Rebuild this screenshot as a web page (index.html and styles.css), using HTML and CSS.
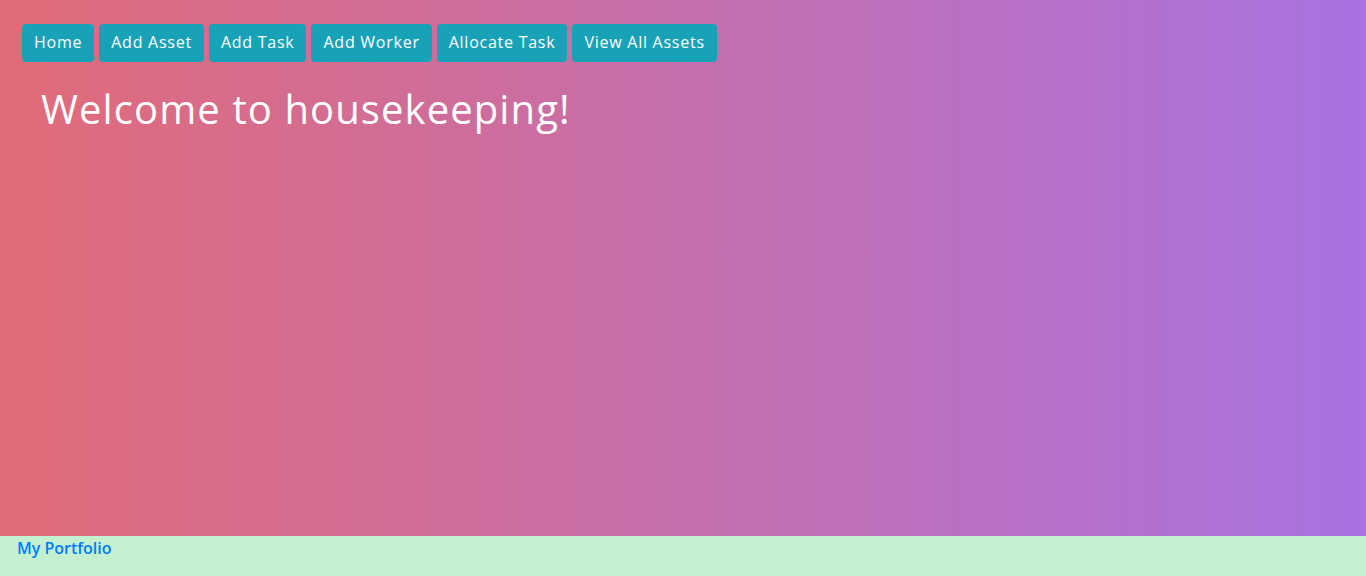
FILE: index.html
```html
<!DOCTYPE html>
<html>
<head>
<meta charset="utf-8">
<link rel="stylesheet" href="styles.css">
</head>
<body>
<div class="page">
  <main class="main">
    <nav class="nav">
      <a class="btn" href="#">Home</a>
      <a class="btn" href="#">Add Asset</a>
      <a class="btn" href="#">Add Task</a>
      <a class="btn" href="#">Add Worker</a>
      <a class="btn" href="#">Allocate Task</a>
      <a class="btn" href="#">View All Assets</a>
    </nav>
    <h1 class="title">Welcome to housekeeping!</h1>
  </main>
  <footer class="footer">
    <a class="footer-link" href="#">My Portfolio</a>
  </footer>
</div>
</body>
</html>
```

FILE: styles.css
```css
html, body {
  margin: 0;
  padding: 0;
  height: 100%;
}
body {
  font-family: "Open Sans", "Noto Sans", sans-serif;
}
.page {
  display: flex;
  flex-direction: column;
  height: 100vh;
}
.main {
  flex: 1;
  background: linear-gradient(to right, #e16b78, #a972e1);
  padding: 24px 22px 0;
}
.nav {
  display: flex;
  gap: 5px;
}
.btn {
  display: block;
  height: 38px;
  line-height: 37px;
  padding: 0 12px;
  background: #17a2b8;
  color: #fff;
  border-radius: 4px;
  font-size: 16px;
  letter-spacing: 0.75px;
  text-decoration: none;
  box-sizing: border-box;
}
.title {
  margin: 23px 0 0 19px;
  font-size: 40px;
  font-weight: 400;
  letter-spacing: 1.1px;
  color: #fff;
  line-height: 48px;
}
.footer {
  height: 40px;
  background: #c3f1cf;
  padding: 0 17px;
}
.footer-link {
  display: inline-block;
  line-height: 24px;
  color: #007bff;
  font-size: 16px;
  font-weight: 600;
  letter-spacing: 0;
  text-decoration: none;
}
```
